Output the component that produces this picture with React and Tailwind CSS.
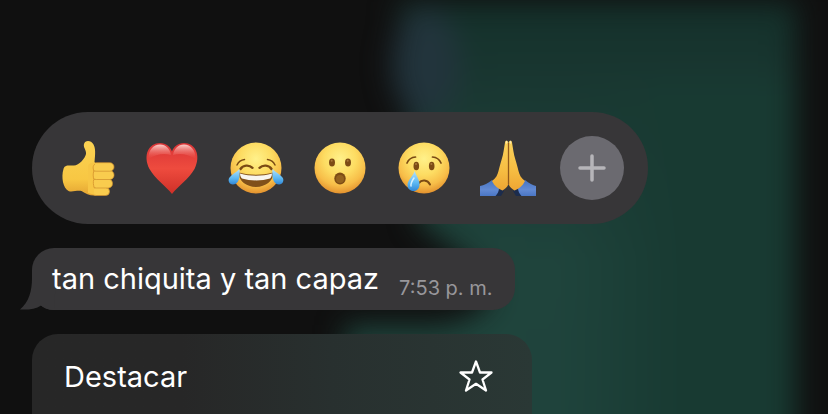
function Backdrop() {
  return (
    <svg
      className="absolute inset-0 h-full w-full"
      viewBox="0 0 828 414"
      preserveAspectRatio="none"
      aria-hidden="true"
    >
      <defs>
        <linearGradient id="wall" x1="0" y1="0" x2="0" y2="1">
          <stop offset="0" stopColor="#14302a" />
          <stop offset="0.2" stopColor="#1a3832" />
          <stop offset="0.55" stopColor="#1f443c" />
          <stop offset="1" stopColor="#1f433c" />
        </linearGradient>
        <linearGradient id="wallRight" x1="0" y1="0" x2="1" y2="0">
          <stop offset="0" stopColor="#183a32" stopOpacity="0" />
          <stop offset="0.5" stopColor="#183a32" />
        </linearGradient>
        <filter id="soft" x="-20%" y="-20%" width="140%" height="140%" colorInterpolationFilters="sRGB">
          <feGaussianBlur stdDeviation="14" />
        </filter>
      </defs>
      <rect width="828" height="414" fill="#101010" />
      <g filter="url(#soft)">
        <path
          d="M398 2H796V470H345V325H440C475 318 495 305 490 285C480 262 445 245 418 222Z"
          fill="url(#wall)"
        />
        <rect x="560" y="80" width="236" height="390" fill="url(#wallRight)" />
        <ellipse cx="426" cy="64" rx="34" ry="56" fill="#22343c" />
      </g>
    </svg>
  );
}

function FaceBase() {
  return (
    <>
      <defs>
        <radialGradient id="face" cx="0.5" cy="0.32" r="0.7">
          <stop offset="0" stopColor="#fff18a" />
          <stop offset="0.45" stopColor="#fddc62" />
          <stop offset="0.75" stopColor="#f7bd48" />
          <stop offset="1" stopColor="#e08c2b" />
        </radialGradient>
        <linearGradient id="tear" x1="0" y1="0" x2="0" y2="1">
          <stop offset="0" stopColor="#b4e2fb" />
          <stop offset="0.6" stopColor="#5cb8f3" />
          <stop offset="1" stopColor="#3187d6" />
        </linearGradient>
      </defs>
      <circle cx="28" cy="28" r="25.500" fill="url(#face)" />
    </>
  );
}

function ThumbsUp() {
  return (
    <>
      <defs>
        <linearGradient id="thumb" x1="0" y1="0" x2="0" y2="1">
          <stop offset="0" stopColor="#fbd353" />
          <stop offset="0.7" stopColor="#f8c743" />
          <stop offset="1" stopColor="#e4a432" />
        </linearGradient>
      </defs>
      <path
        d="M24 4C25 0 31 0 33.500 4.500C35.500 8 35.500 13 34.500 22L40 30V52L36 55.500C30 56 26 54 21.500 51C17 50 12 52.500 8.500 51C3 48 1 37 3.500 29C4.500 24.500 9 25.500 14 25.500C19 25.500 25 18.500 26 14C26.500 10 23 7.500 24 4Z"
        fill="url(#thumb)"
      />
      <g fill="#f9cc4e" stroke="#d0912e" strokeWidth="0.700">
        <rect x="32" y="47.500" width="17.500" height="8" rx="4" />
        <rect x="32" y="39" width="20.500" height="9" rx="4.300" />
        <rect x="32" y="30.500" width="22" height="9" rx="4.300" />
        <rect x="32" y="22.700" width="22" height="8.500" rx="4.200" />
      </g>
      <path d="M28 26C30 22 34 22 36 23.500C33.500 25.500 33 27 34 31C33 34 33 36 34 39.500C33 42 33 45 34.500 48C33.500 50 33.500 53 35 55L28 53Z" fill="#f7c645" />
      <path d="M35 24C32.500 26 33 28 33.800 31C33 34 33 36 33.800 39.500C33 42 33.300 45 34.300 48" fill="none" stroke="#d9992f" strokeWidth="0.900" />
    </>
  );
}

function Heart() {
  return (
    <>
      <defs>
        <linearGradient id="heart" x1="0" y1="0" x2="0" y2="1">
          <stop offset="0" stopColor="#d93436" />
          <stop offset="0.5" stopColor="#ee4b3e" />
          <stop offset="1" stopColor="#cf3028" />
        </linearGradient>
        <linearGradient id="shine" x1="0" y1="0" x2="0" y2="1">
          <stop offset="0" stopColor="#ffe0dc" stopOpacity="0.9" />
          <stop offset="1" stopColor="#f4665c" stopOpacity="0" />
        </linearGradient>
      </defs>
      <path
        d="M28 54C22 46 11 39 5.500 29C-1.500 15 5 3 16 3C22 3 26.500 7 28 11.500C29.500 7 34 3 40 3C51 3 57.500 15 50.500 29C45 39 34 46 28 54Z"
        fill="url(#heart)"
      />
      <path d="M4.500 19C4 10 9.500 4.500 16 4.500C22 4.500 26 9 27 15C20 13 12 14 4.500 19Z" fill="url(#shine)" />
      <path d="M51.500 19C52 10 46.500 4.500 40 4.500C34 4.500 30 9 29 15C36 13 44 14 51.500 19Z" fill="url(#shine)" />
    </>
  );
}

function Joy() {
  return (
    <>
      <FaceBase />
      <g fill="none" stroke="#7a4a14" strokeLinecap="round">
        <path d="M9 25C10.500 22 13 20 16.500 19.500M47 25C45.500 22 43 20 39.500 19.500" strokeWidth="1.500" />
        <path d="M12.500 29C15 25 21 24.500 24.500 27.800M43.500 29C41 25 35 24.500 31.500 27.800" strokeWidth="2.400" />
      </g>
      <path d="M11 32.500C22 35.500 34 35.500 45 32.500C46 40 38.500 47 28 47C17.500 47 10 40 11 32.500Z" fill="#80501a" />
      <path d="M12 33.500C22 36.500 34 36.500 44 33.500C44 36 43 37.500 42 38.500C34 41 22 41 14 38.500C13 37.500 12 36 12 33.500Z" fill="#f8f5ef" />
      <path d="M11.500 29C12 35 12 44 5 44.500C1 44.500 -0.500 40 1.500 37.500C3.500 34.500 8 32.500 11.500 29Z" fill="url(#tear)" />
      <path d="M44.500 29C44 35 44 44 51 44.500C55 44.500 56.500 40 54.500 37.500C52.500 34.500 48 32.500 44.500 29Z" fill="url(#tear)" />
    </>
  );
}

function Wow() {
  return (
    <>
      <FaceBase />
      <g fill="#7d4c15">
        <ellipse cx="20" cy="22.500" rx="3" ry="3.900" />
        <ellipse cx="36" cy="22.500" rx="3" ry="3.900" />
        <ellipse cx="28" cy="38.500" rx="5.700" ry="6" />
      </g>
      <g fill="#a9783b">
        <circle cx="19.700" cy="20.800" r="1" />
        <circle cx="35.700" cy="20.800" r="1" />
      </g>
      <ellipse cx="28" cy="39" rx="4" ry="4" fill="#93621f" />
    </>
  );
}

function Cry() {
  return (
    <>
      <FaceBase />
      <g fill="none" stroke="#7a4a14" strokeLinecap="round">
        <path d="M11 23C12.500 19.500 15.500 17.300 19.500 17M45 23C43.500 19.500 40.500 17.300 36.500 17" strokeWidth="1.700" />
        <path d="M23 43C25.500 39.500 31.500 39.500 34 44.500" strokeWidth="2" />
      </g>
      <g fill="#7d4c15">
        <ellipse cx="20.300" cy="26" rx="2.800" ry="4.300" />
        <ellipse cx="35.700" cy="26" rx="2.800" ry="4.300" />
      </g>
      <g fill="#a9783b">
        <circle cx="20" cy="24" r="1" />
        <circle cx="35.400" cy="24" r="1" />
      </g>
      <path d="M18.700 31C20 36 24 40 23.500 45C23 49 20.500 51 17.500 51C14 51 11.500 48.500 11.500 45C11.500 40 17 36.500 18.700 31Z" fill="url(#tear)" />
      <path d="M18 38C16 41 14.500 43 15 46" fill="none" stroke="#d6f0fd" strokeWidth="1.500" strokeLinecap="round" />
    </>
  );
}

function Pray() {
  return (
    <>
      <defs>
        <linearGradient id="palm" x1="0" y1="0" x2="0" y2="1">
          <stop offset="0" stopColor="#fbd35c" />
          <stop offset="0.6" stopColor="#f6bd42" />
          <stop offset="1" stopColor="#eea533" />
        </linearGradient>
        <linearGradient id="sleeve" x1="0" y1="0" x2="0" y2="1">
          <stop offset="0" stopColor="#4674c2" />
          <stop offset="0.6" stopColor="#628ad3" />
          <stop offset="1" stopColor="#4a76c4" />
        </linearGradient>
      </defs>
      <path d="M18 45L24 51L21 56H13ZM39 45L33 51L36 56H44Z" fill="#1c2c4c" />
      <path d="M0 46C4 45.500 8 43 12 40L19 48C19 51 17.500 54 15.500 56H0Z" fill="url(#sleeve)" />
      <path d="M56 46C53 45.500 49 43 45 40L38 48C38 51 39.500 54 41.500 56H56Z" fill="url(#sleeve)" />
      <path
        d="M25 2.500C25 0 28 0 28.300 2.500V44.500C27 47.500 25 49 22.500 50.500C18 49 14.500 46 12 41C16 38 17.500 35 18.500 31C19.500 27 20.500 23 21.500 20C23.500 14 24 8 25 2.500Z"
        fill="url(#palm)"
      />
      <path
        d="M32 2.500C32 0 29 0 28.700 2.500V44.500C30 47.500 32 49 34.500 50.500C39 49 42.500 46 45 41C41 38 39.500 35 38.500 31C37.500 27 36.500 23 35.500 20C33.500 14 33 8 32 2.500Z"
        fill="url(#palm)"
      />
      <path d="M28.500 3V44.500" stroke="#92591b" strokeWidth="1.300" />
      <path d="M26.500 1.500V3M30.500 1.500V3" stroke="#ffe9ac" strokeWidth="1.300" strokeLinecap="round" />
    </>
  );
}

const reactions = [
  { label: "Me gusta", Icon: ThumbsUp },
  { label: "Me encanta", Icon: Heart },
  { label: "Me divierte", Icon: Joy },
  { label: "Me asombra", Icon: Wow },
  { label: "Me entristece", Icon: Cry },
  { label: "Gracias", Icon: Pray },
];

export default function App() {
  return (
    <main className="relative h-screen overflow-hidden bg-[#101010] font-['Inter','Liberation_Sans',sans-serif] text-white">
      <Backdrop />

      <div className="relative flex flex-col items-start gap-6 px-8 pt-28">
        {/* Reaction bar */}
        <div className="flex items-center gap-5 rounded-full bg-[#373638] px-6 py-6">
          {reactions.map(({ label, Icon }) => (
            <button key={label} type="button" aria-label={label} className="flex size-16 items-center justify-center">
              <svg className="size-14 overflow-visible" viewBox="0 0 56 56" aria-hidden="true">
                <Icon />
              </svg>
            </button>
          ))}
          <button
            type="button"
            aria-label="Más reacciones"
            className="flex size-16 items-center justify-center rounded-full bg-[#6b6a70]"
          >
            <svg className="size-8" viewBox="0 0 32 32" aria-hidden="true">
              <path d="M16 4V28M4 16H28" stroke="#b6b5b9" strokeWidth="3.500" strokeLinecap="round" />
            </svg>
          </button>
        </div>

        {/* Message bubble */}
        <div className="relative flex h-[62px] items-center gap-5 rounded-[22px] bg-[#373638] pr-[22px] pl-5">
          <svg className="absolute bottom-0 -left-3 h-8 w-9" viewBox="0 0 36 32" aria-hidden="true">
            <path d="M12 0C12 13 9 24 0 31.500C8 32 16 31 21 27.500C24 30 28 32 34 32L36 0Z" fill="#373638" />
          </svg>
          <p className="relative text-[29px] leading-9 whitespace-nowrap">tan chiquita y tan capaz</p>
          <time className="pt-[18px] text-[20px] leading-6 whitespace-nowrap text-[#98979b]">7:53 p. m.</time>
        </div>

        {/* Context menu */}
        <div className="w-[500px] rounded-t-[26px] bg-linear-to-r from-[#272727] from-30% via-[#28302f] via-60% to-[#2a3835]">
          <button type="button" className="flex h-[86px] w-full items-center justify-between pr-9 pl-8 text-[29px] leading-9">
            Destacar
            <svg className="size-10" viewBox="0 0 40 40" aria-hidden="true">
              <path
                d="M20 4.500L24 15.500H35.500L26.500 22.500L30 33.500L20 26.800L10 33.500L13.500 22.500L4.500 15.500H16Z"
                fill="none"
                stroke="#fff"
                strokeWidth="2.300"
                strokeLinejoin="round"
              />
            </svg>
          </button>
        </div>
      </div>
    </main>
  );
}
